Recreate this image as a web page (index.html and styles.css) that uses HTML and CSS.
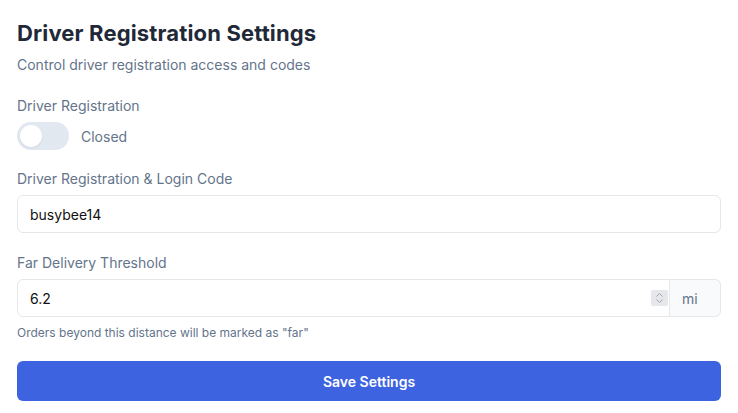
FILE: index.html
```html
<!DOCTYPE html>
<html>
<head>
<meta charset="utf-8">
<link rel="stylesheet" href="styles.css">
</head>
<body>
<div class="page">
  <h1 class="title">Driver Registration Settings</h1>
  <p class="subtitle">Control driver registration access and codes</p>

  <div class="field field-first">
    <div class="label">Driver Registration</div>
    <div class="toggle-row">
      <span class="toggle"><span class="knob"></span></span>
      <span class="toggle-text">Closed</span>
    </div>
  </div>

  <div class="field">
    <div class="label">Driver Registration &amp; Login Code</div>
    <div class="input">busybee14</div>
  </div>

  <div class="field field-third">
    <div class="label">Far Delivery Threshold</div>
    <div class="group">
      <div class="input input-left">
        <span class="value">6.2</span>
        <span class="spin">
          <svg width="9" height="12" viewBox="0 0 9 12"><path d="M1.5 4.5 L4.5 1.5 L7.5 4.5" fill="none" stroke="#9ca3af" stroke-width="1"/><path d="M1.5 7.5 L4.5 10.5 L7.5 7.5" fill="none" stroke="#9ca3af" stroke-width="1"/></svg>
        </span>
      </div>
      <div class="addon">mi</div>
    </div>
    <div class="help">Orders beyond this distance will be marked as "far"</div>
  </div>

  <button class="save">Save Settings</button>
</div>
</body>
</html>
```

FILE: styles.css
```css
html, body {
  margin: 0;
  padding: 0;
  background: #ffffff;
}
body {
  font-family: Inter, "Noto Sans", sans-serif;
  -webkit-font-smoothing: antialiased;
}
.page {
  padding: 19px 17px 0 17px;
}
.title {
  margin: 0;
  font-size: 22px;
  line-height: 28px;
  font-weight: 700;
  color: #1f2937;
  letter-spacing: 0.15px;
}
.subtitle {
  margin: 8px 0 0 0;
  font-size: 14px;
  line-height: 20px;
  color: #64748b;
}
.field {
  margin-top: 19px;
}
.field-first {
  margin-top: 21px;
}
.field-third {
  margin-top: 20px;
}
.label {
  font-size: 14px;
  line-height: 20px;
  color: #64748b;
  margin-bottom: 6px;
}
.toggle-row {
  display: flex;
  align-items: center;
  gap: 12px;
  height: 28px;
}
.toggle {
  width: 52px;
  height: 28px;
  border-radius: 14px;
  background: #e2e8f0;
  display: flex;
  align-items: center;
  padding-left: 3px;
  box-sizing: border-box;
}
.knob {
  width: 22px;
  height: 22px;
  border-radius: 50%;
  background: #ffffff;
  box-shadow: 0 1px 2px rgba(0,0,0,0.08);
}
.toggle-text {
  font-size: 14px;
  color: #64748b;
}
.input {
  height: 38px;
  box-sizing: border-box;
  border: 1px solid #e5e7eb;
  border-radius: 6px;
  padding: 0 12px;
  display: flex;
  align-items: center;
  font-size: 14px;
  color: #111111;
}
.group {
  display: flex;
  height: 38px;
}
.input-left {
  flex: 1;
  border-radius: 6px 0 0 6px;
  padding-right: 1px;
  justify-content: space-between;
}
.spin {
  width: 17px;
  height: 16px;
  background: #e5e7eb;
  display: flex;
  align-items: center;
  justify-content: center;
  border-radius: 2px;
}
.addon {
  width: 51px;
  box-sizing: border-box;
  background: #f9fafb;
  border: 1px solid #e5e7eb;
  border-left: none;
  border-radius: 0 6px 6px 0;
  display: flex;
  align-items: center;
  padding-left: 12px;
  font-size: 14px;
  color: #64748b;
}
.help {
  margin-top: 8px;
  font-size: 12px;
  line-height: 16px;
  color: #64748b;
}
.save {
  display: block;
  width: 100%;
  margin-top: 20px;
  height: 40px;
  border: none;
  border-radius: 6px;
  background: #3e63e1;
  color: #ffffff;
  font-family: Inter, "Noto Sans", sans-serif;
  font-size: 14px;
  font-weight: 600;
}
```
